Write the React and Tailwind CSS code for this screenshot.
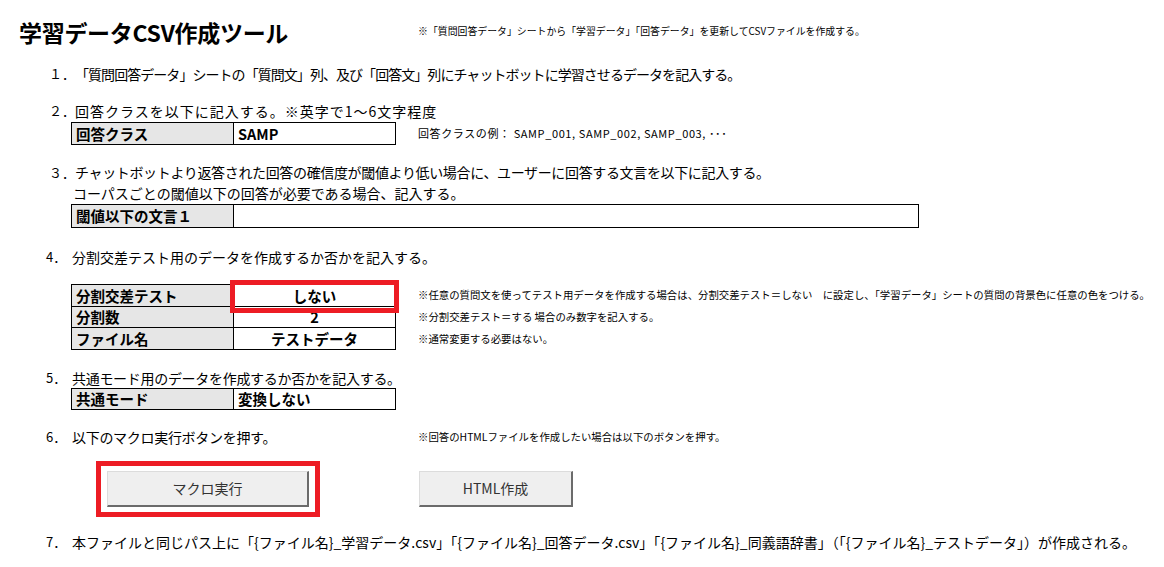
import React from 'react';

const JP = { fontFamily: '"Noto Sans CJK JP", "Noto Sans", sans-serif' };

// numbered instruction line: number column + text
function Step({ num, wide, track = '', children, className = '' }) {
  return (
    <div className={`flex items-center h-[20px] text-[14px] text-black ${wide ? 'pl-[49px]' : 'pl-[46px]'} ${className}`}>
      <span className="w-[26px] text-[13px]">{num}</span>
      <span className={`whitespace-nowrap ${track}`}>{children}</span>
    </div>
  );
}

function Cell({ label, value, align = 'left', h = 'h-[23px]', last }) {
  return (
    <div className={`flex ${h} ${last ? '' : 'border-b border-black'}`}>
      <div className="w-[162px] bg-[#e6e6e6] border-r border-black flex items-center pl-[4px] font-bold text-[14.5px]">
        {label}
      </div>
      <div className={`flex-1 flex items-center font-bold text-[14.5px] ${align === 'center' ? 'justify-center' : 'pl-[4px]'}`}>
        {value}
      </div>
    </div>
  );
}

function Note({ children, className = '' }) {
  return <div className={`text-[10.4px] text-black whitespace-nowrap ${className}`}>{children}</div>;
}

function XlButton({ children, width }) {
  return (
    <div className={`${width} h-[36px] bg-[#efefef] border-t border-l border-[#dcdcdc] border-r-2 border-b-2 border-r-[#6b6b6b] border-b-[#6b6b6b] flex items-center justify-center text-[14px] text-[#333]`}>
      {children}
    </div>
  );
}

export default function App() {
  return (
    <div className="w-[1164px] h-[567px] bg-white overflow-hidden text-black" style={JP}>
      {/* ── header ── */}
      <div className="flex items-center h-[64px]">
        <div className="w-[418px] pl-[19px] text-[23px] font-bold tracking-[-0.3px]">学習データCSV作成ツール</div>
        <Note className="mt-[-2px] !text-[9.9px]">※「質問回答データ」シートから「学習データ」「回答データ」を更新してCSVファイルを作成する。</Note>
      </div>

      <Step num="１．" wide track="tracking-[-0.95px]">「質問回答データ」シートの「質問文」列、及び「回答文」列にチャットボットに学習させるデータを記入する。</Step>

      {/* ── 2 ── */}
      <Step num="２．" wide track="tracking-[1px]" className="mt-[17px]">回答クラスを以下に記入する。※英字で1～6文字程度</Step>
      <div className="flex items-center mt-[1px]">
        <div className="ml-[71px] w-[325px] border border-black">
          <Cell label="回答クラス" value="SAMP" h="h-[21px]" last />
        </div>
        <Note className="ml-[22px] !text-[11px] tracking-[0.6px]">回答クラスの例： SAMP_001, SAMP_002, SAMP_003, ･･･</Note>
      </div>

      {/* ── 3 ── */}
      <div className="mt-[17px]">
        <Step num="３．" wide track="tracking-[-0.35px]" className="h-[21px]">チャットボットより返答された回答の確信度が閾値より低い場合に、ユーザーに回答する文言を以下に記入する。</Step>
        <div className="h-[21px] flex items-center pl-[73px] text-[14px] whitespace-nowrap">コーパスごとの閾値以下の回答が必要である場合、記入する。</div>
      </div>
      <div className="ml-[71px] w-[848px] border border-black">
        <Cell label="閾値以下の文言１" value="" h="h-[22px]" last />
      </div>

      {/* ── 4 ── */}
      <Step num="4．" className="mt-[19px]">分割交差テスト用のデータを作成するか否かを記入する。</Step>
      <div className="flex mt-[17px]">
        <div className="relative ml-[71px] w-[325px] border border-black">
          <Cell label="分割交差テスト" value="しない" align="center" h="h-[22px]" />
          <Cell label="分割数" value="2" align="center" h="h-[21px]" />
          <Cell label="ファイル名" value="テストデータ" align="center" h="h-[21px]" last />
          <div className="absolute left-[158px] top-[-5px] w-[169px] h-[33px] border-[5px] border-[#ed1c24]" />
        </div>
        <div className="ml-[22px] flex flex-col">
          <Note className="h-[22px] flex items-center">※任意の質問文を使ってテスト用データを作成する場合は、分割交差テスト＝しない　に設定し、「学習データ」シートの質問の背景色に任意の色をつける。</Note>
          <Note className="h-[22px] flex items-center">※分割交差テスト＝する 場合のみ数字を記入する。</Note>
          <Note className="h-[22px] flex items-center">※通常変更する必要はない。</Note>
        </div>
      </div>

      {/* ── 5 ── */}
      <Step num="5．" track="tracking-[-0.3px]" className="mt-[18px]">共通モード用のデータを作成するか否かを記入する。</Step>
      <div className="ml-[71px] w-[325px] border border-black">
        <Cell label="共通モード" value="変換しない" h="h-[20px]" last />
      </div>

      {/* ── 6 ── */}
      <div className="flex items-center mt-[17px] h-[20px]">
        <div className="w-[418px]">
          <Step num="6．" track="tracking-[-0.3px]">以下のマクロ実行ボタンを押す。</Step>
        </div>
        <Note>※回答のHTMLファイルを作成したい場合は以下のボタンを押す。</Note>
      </div>
      <div className="flex mt-[24px] pl-[107px]">
        <div className="relative">
          <XlButton width="w-[202px]">マクロ実行</XlButton>
          <div className="absolute left-[-11px] top-[-10px] w-[224px] h-[56px] border-[5px] border-[#ed1c24]" />
        </div>
        <div className="ml-[110px]">
          <XlButton width="w-[154px]">HTML作成</XlButton>
        </div>
      </div>

      {/* ── 7 ── */}
      <Step num="7．" className="mt-[25px]">本ファイルと同じパス上に「{'{'}ファイル名{'}'}_学習データ.csv」「{'{'}ファイル名{'}'}_回答データ.csv」「{'{'}ファイル名{'}'}_同義語辞書」（「{'{'}ファイル名{'}'}_テストデータ」）が作成される。</Step>
    </div>
  );
}
